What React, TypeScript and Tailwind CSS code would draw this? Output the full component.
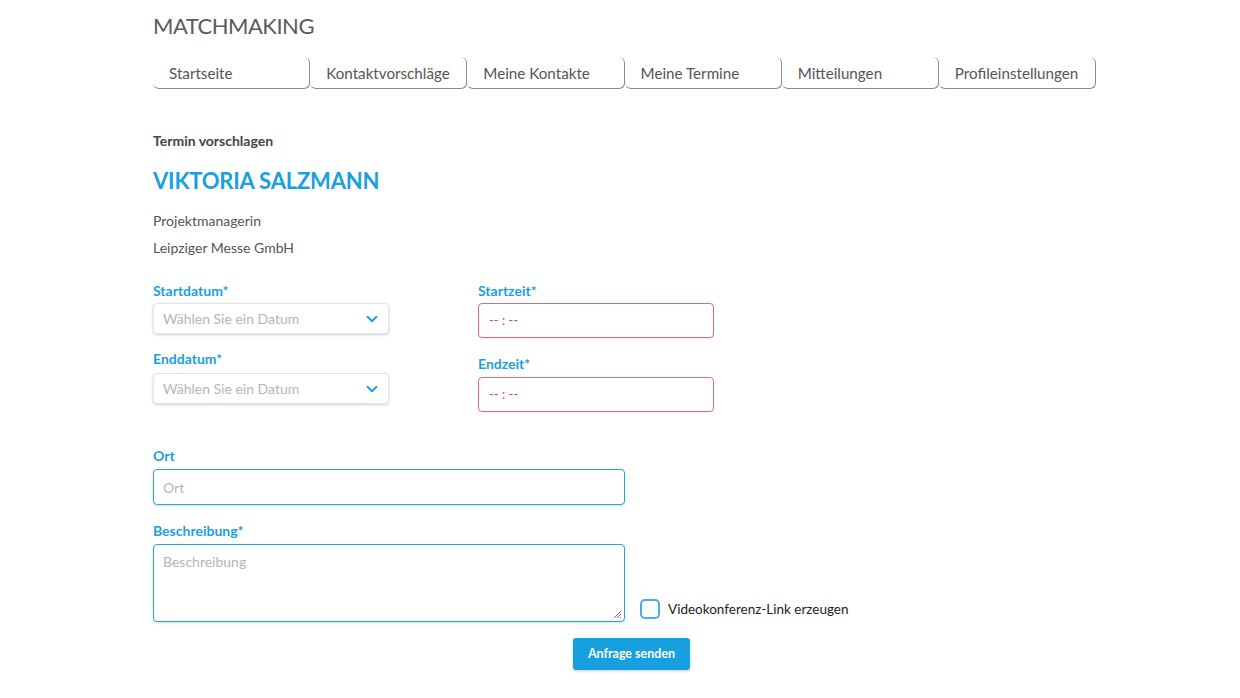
import { ChevronDown } from 'lucide-react'

const tabs = ['Startseite', 'Kontaktvorschläge', 'Meine Kontakte', 'Meine Termine', 'Mitteilungen', 'Profileinstellungen']

function Label({ children, className = '' }: { children: React.ReactNode; className?: string }) {
  return <div className={`text-[14px] font-bold text-[#1a9fe0] leading-5 ${className}`}>{children}</div>
}

function DateSelect() {
  return (
    <div className="flex h-[31px] w-[236px] items-center justify-between rounded-[4px] border border-[#e4e4e4] bg-white pl-[9px] pr-[7px] shadow-[0_1px_3px_rgba(0,0,0,0.18)]">
      <span className="text-[14px] text-[#b5b5b5]">Wählen Sie ein Datum</span>
      <ChevronDown className="h-[18px] w-[18px] text-[#1a9fe0]" strokeWidth={2.5} />
    </div>
  )
}

function TimeInput() {
  return (
    <div className="flex h-[35px] w-[236px] items-center rounded-[4px] border border-[#dc6f78] bg-white pl-[10px] shadow-[0_1px_2px_rgba(0,0,0,0.08)]">
      <span className="whitespace-pre text-[13px] text-[#d04a55]">-- : --</span>
    </div>
  )
}

export default function App() {
  return (
    <div className="min-h-[698px] bg-white text-[#555] [font-family:Lato,'Open_Sans',sans-serif]">
      <div className="ml-[153px] w-[943px] pt-[10px]">
        <h1 className="text-[22px] font-normal leading-8 tracking-[-0.5px] text-[#5a5a5a]">MATCHMAKING</h1>

        <nav className="mt-[15px] flex">
          {tabs.map((t) => (
            <div
              key={t}
              className="flex h-[32px] flex-1 items-center rounded-[6px] border-b border-r border-[#8a8a8a] pl-[16px] pt-[1px] text-[15.2px] text-[#555]"
            >
              {t}
            </div>
          ))}
        </nav>

        <div className="mt-[41px] text-[14px] font-bold text-[#444]">Termin vorschlagen</div>
        <div className="mt-[14px] text-[22px] font-bold leading-8 tracking-[-0.2px] text-[#1a9fe0]">VIKTORIA SALZMANN</div>
        <div className="mt-[14px] text-[14px] leading-5 text-[#555]">Projektmanagerin</div>
        <div className="mt-[7px] text-[14px] leading-5 text-[#555]">Leipziger Messe GmbH</div>

        <div className="mt-[23px] flex gap-[89px]">
          <div className="flex flex-col">
            <Label>Startdatum*</Label>
            <div className="mt-[2px]">
              <DateSelect />
            </div>
            <Label className="mt-[15px]">Enddatum*</Label>
            <div className="mt-[4px]">
              <DateSelect />
            </div>
          </div>
          <div className="flex flex-col">
            <Label>Startzeit*</Label>
            <div className="mt-[2px]">
              <TimeInput />
            </div>
            <Label className="mt-[16px]">Endzeit*</Label>
            <div className="mt-[3px]">
              <TimeInput />
            </div>
          </div>
        </div>

        <Label className="mt-[34px]">Ort</Label>
        <div className="mt-[3px] flex h-[36px] w-[472px] items-center rounded-[4px] border border-[#2aa3dc] pl-[9px] shadow-[0_1px_3px_rgba(0,0,0,0.15)]">
          <span className="text-[14px] text-[#b5b5b5]">Ort</span>
        </div>

        <Label className="mt-[16px]">Beschreibung*</Label>
        <div className="mt-[3px] flex items-end">
          <div className="relative h-[78px] w-[472px] rounded-[4px] border border-[#2aa3dc] pl-[9px] pt-[4px] shadow-[0_1px_3px_rgba(0,0,0,0.15)]">
            <span className="text-[14px] text-[#b5b5b5]">Beschreibung</span>
            <svg className="absolute bottom-[2px] right-[2px]" width="10" height="10" viewBox="0 0 10 10">
              <path d="M9 2L2 9M9 5L5 9M9 8L8 9" stroke="#777" strokeWidth="1" />
            </svg>
          </div>
          <label className="mb-[3px] ml-[15px] flex items-center gap-[8px]">
            <span className="block h-[20px] w-[20px] shrink-0 rounded-[5px] border-2 border-[#4aaee0] bg-white" />
            <span className="text-[13.5px] text-[#222]">Videokonferenz-Link erzeugen</span>
          </label>
        </div>

        <div className="mt-[16px] flex justify-center">
          <button className="ml-[14px] h-[32px] w-[117px] rounded-[3px] bg-[#17a0e0] text-[12.5px] font-bold text-white shadow-[0_1px_3px_rgba(0,0,0,0.2)]">
            Anfrage senden
          </button>
        </div>
      </div>
    </div>
  )
}
